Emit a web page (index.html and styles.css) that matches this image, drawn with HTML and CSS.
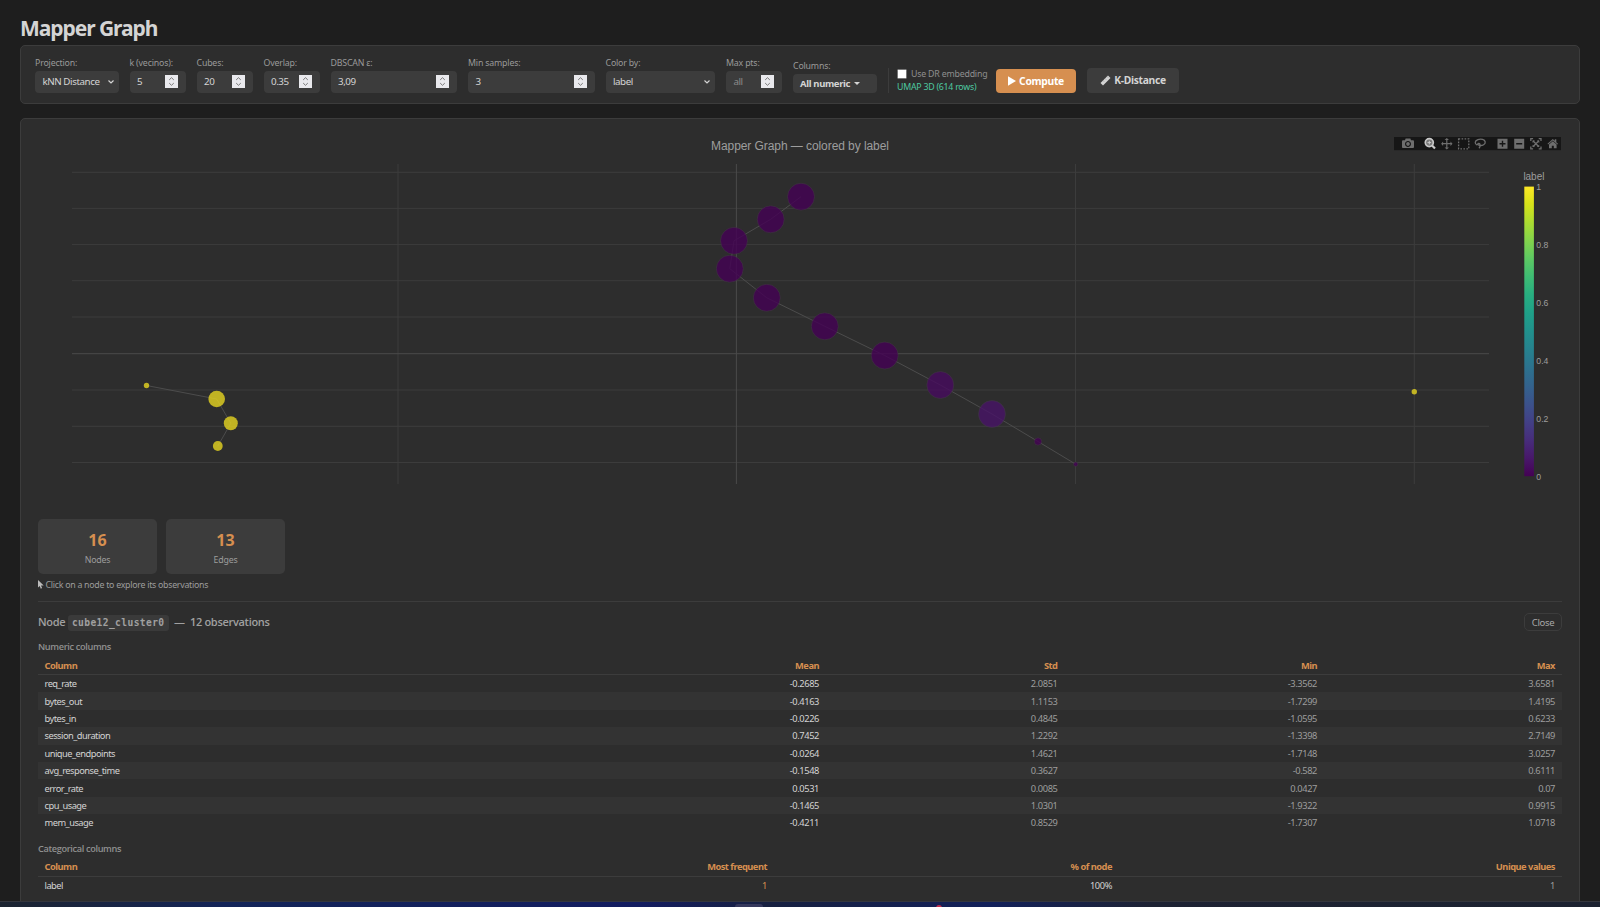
FILE: index.html
```html
<!DOCTYPE html>
<html lang="en">
<head>
  <meta charset="UTF-8">
  <title>Mapper Graph</title>
  <link rel="stylesheet" href="styles.css">
</head>
<body>

  <svg class="defs" width="0" height="0">
    <symbol id="spin" viewBox="0 0 13 13">
      <path d="M4.2 4.9 6.5 2.7 8.8 4.9M4.2 8.1 6.5 10.3 8.8 8.1" fill="none" stroke="#777" stroke-width="1"/>
    </symbol>
    <symbol id="chev" viewBox="0 0 8 6">
      <path d="M1.5 1.5 4 4 6.5 1.5" fill="none" stroke="#d4d4d4" stroke-width="1.2"/>
    </symbol>
  </svg>

  <main class="page">
    <h1>Mapper Graph</h1>

    <section class="panel toolbar">
      <div class="field w-proj"><label>Projection:</label><div class="input select"><span>kNN Distance</span><svg class="chev"><use href="#chev"/></svg></div></div>
      <div class="field w-num"><label>k (vecinos):</label><div class="input"><span>5</span><svg class="spin"><use href="#spin"/></svg></div></div>
      <div class="field w-num"><label>Cubes:</label><div class="input"><span>20</span><svg class="spin"><use href="#spin"/></svg></div></div>
      <div class="field w-num"><label>Overlap:</label><div class="input"><span>0.35</span><svg class="spin"><use href="#spin"/></svg></div></div>
      <div class="field w-wide"><label>DBSCAN ε:</label><div class="input"><span>3,09</span><svg class="spin"><use href="#spin"/></svg></div></div>
      <div class="field w-wide"><label>Min samples:</label><div class="input"><span>3</span><svg class="spin"><use href="#spin"/></svg></div></div>
      <div class="field w-color"><label>Color by:</label><div class="input select"><span>label</span><svg class="chev"><use href="#chev"/></svg></div></div>
      <div class="field w-num"><label>Max pts:</label><div class="input empty"><span>all</span><svg class="spin"><use href="#spin"/></svg></div></div>
      <div class="field w-cols"><label>Columns:</label><button class="dropdown">All numeric <i class="caret"></i></button></div>
      <div class="embed">
        <div class="check"><i class="box"></i><span>Use DR embedding</span></div>
        <div class="umap">UMAP 3D (614 rows)</div>
      </div>
      <button class="btn primary"><svg width="8" height="10" viewBox="0 0 8 10"><path d="M0 .3v9.4L8 5z" fill="#fff"/></svg><span>Compute</span></button>
      <button class="btn"><svg width="11" height="11" viewBox="0 0 11 11"><path d="M.5 8 8 .5 10.5 3 3 10.5z" fill="#d4d4d4"/><path d="M3 5.5l1 1M5 3.5l1 1M7 1.5l1 1" stroke="#777" stroke-width=".6"/></svg><span>K-Distance</span></button>
    </section>

    <section class="panel result">
      <svg class="chart" viewBox="38 119 1524 400" width="1524" height="400">
        <defs>
          <linearGradient id="viridis" x1="0" y1="1" x2="0" y2="0">
            <stop offset="0" stop-color="#440154"/>
            <stop offset=".0627" stop-color="#48186a"/>
            <stop offset=".1255" stop-color="#472d7b"/>
            <stop offset=".1882" stop-color="#424086"/>
            <stop offset=".251" stop-color="#3b528b"/>
            <stop offset=".3137" stop-color="#33638d"/>
            <stop offset=".3765" stop-color="#2c728e"/>
            <stop offset=".4392" stop-color="#26828e"/>
            <stop offset=".502" stop-color="#21918c"/>
            <stop offset=".5647" stop-color="#1fa088"/>
            <stop offset=".6275" stop-color="#28ae80"/>
            <stop offset=".6902" stop-color="#3fbc73"/>
            <stop offset=".7529" stop-color="#5ec962"/>
            <stop offset=".8157" stop-color="#84d44b"/>
            <stop offset=".8784" stop-color="#addc30"/>
            <stop offset=".9412" stop-color="#d8e219"/>
            <stop offset="1" stop-color="#fde725"/>
          </linearGradient>
        </defs>

        <text class="chart-title" x="800" y="149.5" textLength="178" text-anchor="middle">Mapper Graph — colored by label</text>

        <g class="grid">
          <path d="M72 172.3H1489M72 208.4H1489M72 244.6H1489M72 280.7H1489M72 317H1489M72 390H1489M72 426.3H1489M72 462.5H1489"/>
          <path d="M398 164V484M1075.5 164V484M1414.3 164V484"/>
        </g>
        <path class="zero" d="M72 353.7H1489M736.4 164V484"/>

        <g class="edges">
          <path d="M801 196.7 770.7 219.3 734 240.8 729.8 268.7 766.8 297.8 824.8 326.3 884.7 355.5 940.3 385 992 414 1038 441.5 1075.7 464.2"/>
          <path d="M146.5 385.5 216.7 399 230.8 423.3 217.8 446"/>
        </g>

        <g class="nodes">
          <circle cx="801" cy="196.7" r="13.5" fill="#440154"/>
          <circle cx="770.7" cy="219.3" r="13.5" fill="#440154"/>
          <circle cx="734" cy="240.8" r="13.5" fill="#440154"/>
          <circle cx="729.8" cy="268.7" r="13.5" fill="#440154"/>
          <circle cx="766.8" cy="297.8" r="13.5" fill="#440154"/>
          <circle cx="824.8" cy="326.3" r="13.5" fill="#440154"/>
          <circle cx="884.7" cy="355.5" r="13.5" fill="#440154"/>
          <circle cx="940.3" cy="385" r="13.5" fill="#470b5e"/>
          <circle cx="992" cy="414" r="13.5" fill="#481467"/>
          <circle cx="1038" cy="441.5" r="3.7" fill="#440154"/>
          <circle cx="1075.7" cy="464.2" r="2.2" fill="#440154"/>
        </g>
        <g class="nodes yellow">
          <circle cx="146.5" cy="385.5" r="2.7"/>
          <circle cx="216.7" cy="399" r="8.3"/>
          <circle cx="230.8" cy="423.3" r="7"/>
          <circle cx="217.8" cy="446" r="4.9"/>
          <circle cx="1414.3" cy="391.7" r="2.7"/>
        </g>

        <rect x="1524.3" y="186.6" width="9.6" height="289.6" fill="url(#viridis)"/>
        <g class="ticks">
          <text class="bar-title" x="1523.4" y="179.6" textLength="21">label</text>
          <text x="1536.3" y="189.6">1</text>
          <text x="1536.3" y="247.9">0.8</text>
          <text x="1536.3" y="305.8">0.6</text>
          <text x="1536.3" y="363.7">0.4</text>
          <text x="1536.3" y="422">0.2</text>
          <text x="1536.3" y="479.8">0</text>
        </g>

        <rect x="1394" y="137" width="167" height="13.2" fill="#161616"/>
        <g class="modebar">
          <path transform="matrix(.012 0 0 -.012 1402 147.5)" d="m500 450c-83 0-150-67-150-150 0-83 67-150 150-150 83 0 150 67 150 150 0 83-67 150-150 150z m400 150h-120c-16 0-34 13-39 29l-31 93c-6 15-23 28-40 28h-340c-16 0-34-13-39-28l-31-94c-6-15-23-28-40-28h-120c-55 0-100-45-100-100v-450c0-55 45-100 100-100h800c55 0 100 45 100 100v450c0 55-45 100-100 100z m-400-550c-138 0-250 112-250 250 0 138 112 250 250 250 138 0 250-112 250-250 0-138-112-250-250-250z"/>
          <g class="active">
            <circle cx="1429.3" cy="142.6" r="4" fill="#777" stroke-width="1.7"/>
            <path d="M1432.3 145.8 1435 148.6" stroke-width="2.2"/>
            <path d="M1427.5 142.6h3.6M1429.3 140.8v3.6" stroke-width="1"/>
          </g>
          <path d="M1446.2 140h1.2v3.1h3.1v-1.6l2 2.2-2 2.2v-1.6h-3.1v3.1h1.6l-2.2 2-2.2-2h1.6v-3.1h-3.1v1.6l-2-2.2 2-2.2v1.6h3.1v-3.1h-1.6l2.2-2 2.2 2h-1.6z"/>
          <rect class="line" x="1458.6" y="138.8" width="10.2" height="10" stroke-dasharray="1.6 1.4"/>
          <path class="line" d="M1477.3 145.2c-3-1.3-2.7-4.3.6-5.5 3-1.1 6.9-.3 7.3 2.2.4 2.4-2.8 4-5.5 3.5-2.2-.4-2.4-2-1-2.1 1.7-.1 2 3.2.3 4.9"/>
          <path fill-rule="evenodd" d="M1497.5 138.7h10v10h-10zM1501.8 140.7v2.3h-2.3v1.4h2.3v2.3h1.4v-2.3h2.3v-1.4h-2.3v-2.3z"/>
          <path fill-rule="evenodd" d="M1514.2 138.7h10v10h-10zM1516.2 143v1.4h6v-1.4z"/>
          <path class="line" d="M1530.8 141v-2.3h2.3M1538.7 138.7h2.3v2.3M1541 146.5v2.3h-2.3M1533.1 148.8h-2.3v-2.3M1532.9 140.8l6 6M1538.9 140.8l-6 6"/>
          <path d="M1532.6 140.5h2.4l-2.4 2.4zM1539.2 140.5h-2.4l2.4 2.4zM1532.6 147.1h2.4l-2.4-2.4zM1539.2 147.1h-2.4l2.4-2.4z"/>
          <path d="M1547.5 143.7 1552.8 139l2 1.8v-1.5h1.5v2.9l1.7 1.5-.6.7-4.6-4-4.7 4zM1549 144.6l3.8-3.3 3.8 3.3v3.7h-2.8v-2.6h-2v2.6H1549z"/>
        </g>
      </svg>

      <div class="stats">
        <div class="stat"><b>16</b><span>Nodes</span></div>
        <div class="stat"><b>13</b><span>Edges</span></div>
      </div>
      <div class="hint"><svg width="6" height="9" viewBox="0 0 6 9"><path d="M0 0v7.6l1.7-1.5 1.1 2.6 1.3-.6L3 5.5h2.7z" fill="#bbb"/></svg><span>Click on a node to explore its observations</span></div>

      <div class="detail">
        <div class="detail-head">
          <h2>Node <code>cube12_cluster0</code> <span class="count">— &nbsp;12 observations</span></h2>
          <button class="close">Close</button>
        </div>

        <h3>Numeric columns</h3>
        <table class="numeric">
          <colgroup><col class="c-name"><col class="c-mean"><col class="c-std"><col class="c-min"><col></colgroup>
          <thead><tr><th>Column</th><th>Mean</th><th>Std</th><th>Min</th><th>Max</th></tr></thead>
          <tbody>
            <tr><td>req_rate</td><td>-0.2685</td><td>2.0851</td><td>-3.3562</td><td>3.6581</td></tr>
            <tr><td>bytes_out</td><td>-0.4163</td><td>1.1153</td><td>-1.7299</td><td>1.4195</td></tr>
            <tr><td>bytes_in</td><td>-0.0226</td><td>0.4845</td><td>-1.0595</td><td>0.6233</td></tr>
            <tr><td>session_duration</td><td>0.7452</td><td>1.2292</td><td>-1.3398</td><td>2.7149</td></tr>
            <tr><td>unique_endpoints</td><td>-0.0264</td><td>1.4621</td><td>-1.7148</td><td>3.0257</td></tr>
            <tr><td>avg_response_time</td><td>-0.1548</td><td>0.3627</td><td>-0.582</td><td>0.6111</td></tr>
            <tr><td>error_rate</td><td>0.0531</td><td>0.0085</td><td>0.0427</td><td>0.07</td></tr>
            <tr><td>cpu_usage</td><td>-0.1465</td><td>1.0301</td><td>-1.9322</td><td>0.9915</td></tr>
            <tr><td>mem_usage</td><td>-0.4211</td><td>0.8529</td><td>-1.7307</td><td>1.0718</td></tr>
          </tbody>
        </table>

        <h3>Categorical columns</h3>
        <table class="categorical">
          <colgroup><col class="c-name"><col class="c-freq"><col class="c-pct"><col></colgroup>
          <thead><tr><th>Column</th><th>Most frequent</th><th>% of node</th><th>Unique values</th></tr></thead>
          <tbody>
            <tr><td>label</td><td class="accent">1</td><td class="strong">100%</td><td>1</td></tr>
          </tbody>
        </table>
      </div>
    </section>
  </main>

  <footer class="taskbar"><i class="app"></i><i class="badge"></i></footer>

</body>
</html>
```
FILE: styles.css
```css
* {
  box-sizing: border-box;
}
html, body {
  margin: 0;
  padding: 0;
}
body {
  display: flex;
  flex-direction: column;
  height: 907px;
  overflow: hidden;
  background: #1e1e1e;
  color: #d4d4d4;
  font-family: "Noto Sans", "Open Sans", sans-serif;
  font-size: 9.5px;
}
.defs {
  position: absolute;
}
.page {
  flex: 1;
  min-height: 0;
  overflow: hidden;
  padding: 0 20px;
}
h1 {
  margin: 0;
  padding-top: 14px;
  height: 45px;
  line-height: 29px;
  font-size: 21px;
  font-weight: 700;
  letter-spacing: -1.05px;
}
.panel {
  background: #2d2d2d;
  border: 1px solid #3c3c3c;
  border-radius: 5px;
}
button {
  font-family: inherit;
  border: none;
  margin: 0;
}

/* toolbar */
.toolbar {
  display: flex;
  align-items: flex-end;
  gap: 11px;
  height: 59px;
  padding: 0 14px 10.5px;
}
.field label {
  display: block;
  height: 14px;
  line-height: 13px;
  color: #9a9a9a;
  font-size: 8.8px;
  letter-spacing: -0.18px;
  white-space: nowrap;
}
.w-proj { width: 83.5px; }
.w-num { width: 56px; }
.w-wide { width: 126.5px; }
.w-color { width: 109.5px; }
.w-cols { width: 84px; }
.input {
  display: flex;
  align-items: center;
  justify-content: space-between;
  height: 22px;
  padding: 0 8px 0 7.5px;
  border-radius: 4px;
  background: #3c3c3c;
  font-size: 9.8px;
  letter-spacing: -0.45px;
  white-space: nowrap;
}
.select {
  padding-right: 4px;
}
.empty {
  color: #8a8a8a;
}
.spin {
  width: 13px;
  height: 13px;
  background: #e9e9ed;
}
.chev {
  width: 8px;
  height: 6px;
}
.dropdown {
  display: flex;
  align-items: center;
  gap: 4px;
  width: 100%;
  height: 19px;
  padding: 0 7px;
  border-radius: 4px;
  background: #3c3c3c;
  color: #d4d4d4;
  font-size: 9.5px;
  font-weight: 700;
  letter-spacing: -0.35px;
  white-space: nowrap;
}
.caret {
  border: 3px solid transparent;
  border-top-color: #d4d4d4;
  border-bottom: 0;
}
.embed {
  width: 97px;
  height: 25px;
  padding-left: 8px;
  border-left: 1px solid #3c3c3c;
  white-space: nowrap;
}
.check {
  display: flex;
  align-items: center;
  gap: 4px;
  height: 12px;
  color: #8f8f8f;
  font-size: 8.8px;
  letter-spacing: -0.2px;
}
.box {
  flex: none;
  width: 10px;
  height: 10px;
  border: 1px solid #767676;
  border-radius: 1.5px;
  background: #fff;
}
.umap {
  height: 14px;
  line-height: 15px;
  color: #4ec9a0;
  font-size: 8.8px;
  letter-spacing: -0.25px;
}
.btn {
  display: flex;
  align-items: center;
  justify-content: center;
  gap: 3px;
  width: 92px;
  height: 25px;
  padding: 0;
  border-radius: 4px;
  background: #3c3c3c;
  color: #d4d4d4;
  font-size: 10.3px;
  font-weight: 700;
  letter-spacing: -0.3px;
}
.primary {
  width: 80px;
  height: 24px;
  background: #d68f50;
  color: #fff;
}

/* chart */
.result {
  height: 820px;
  margin-top: 14px;
  padding: 0 17px;
}
.chart {
  display: block;
  font-family: "Liberation Sans", Arial, sans-serif;
}
.chart-title {
  fill: #9d9d9d;
  font-size: 12px;
}
.grid path {
  stroke: #3c3c3c;
}
.zero {
  stroke: #4a4a4a;
}
.edges path {
  fill: none;
  stroke: #4c4c4c;
}
.nodes circle {
  opacity: .8;
  stroke: #444;
  stroke-width: .5;
}
.yellow circle {
  fill: #e6d520;
  stroke: none;
}
.ticks text {
  fill: #9d9d9d;
  font-size: 8.7px;
}
.ticks .bar-title {
  font-size: 10px;
}
.modebar {
  fill: #6e6e6e;
}
.modebar .line {
  fill: none;
  stroke: #6e6e6e;
  stroke-width: 1.3;
}
.active {
  fill: none;
  stroke: #c8c8c8;
}

/* stats */
.stats {
  display: flex;
  gap: 9px;
}
.stat {
  display: flex;
  flex-direction: column;
  align-items: center;
  width: 119px;
  height: 55px;
  padding-top: 9px;
  border-radius: 5px;
  background: #3c3c3c;
}
.stat b {
  height: 25px;
  line-height: 24px;
  color: #d68f50;
  font-size: 16px;
}
.stat span {
  line-height: 14px;
  color: #9d9d9d;
  font-size: 8.8px;
  letter-spacing: -0.2px;
}
.hint {
  display: flex;
  align-items: center;
  gap: 1.5px;
  height: 21px;
  color: #9d9d9d;
  font-size: 8.8px;
  letter-spacing: -0.27px;
}

/* node detail */
.detail {
  margin-top: 6px;
  border-top: 1px solid #3c3c3c;
}
.detail-head {
  display: flex;
  align-items: center;
  justify-content: space-between;
  height: 40px;
}
h2, h3 {
  margin: 0;
  font-family: "Open Sans", "Noto Sans", sans-serif;
  font-weight: 600;
}
h2 {
  color: #a0a0a0;
  font-size: 11px;
  letter-spacing: -0.3px;
}
h2 code {
  display: inline-block;
  height: 16px;
  line-height: 16px;
  padding: 0 4px;
  border-radius: 3px;
  background: #3a3a3a;
  font-family: "DejaVu Sans Mono", monospace;
  font-size: 9.6px;
  font-weight: 700;
  letter-spacing: 0.4px;
}
.count {
  margin-left: 3px;
}
.close {
  width: 38px;
  height: 18px;
  padding: 0;
  border: 1px solid #3c3c3c;
  border-radius: 5px;
  background: none;
  color: #a8a8a8;
  font-size: 9.5px;
  letter-spacing: -0.3px;
}
h3 {
  height: 15px;
  line-height: 10px;
  color: #909090;
  font-size: 9.2px;
  letter-spacing: -0.35px;
}
table {
  width: 100%;
  table-layout: fixed;
  border-collapse: separate;
  border-spacing: 0;
}
th, td {
  height: 17.4px;
  line-height: 16px;
  padding: 0 7px;
  text-align: right;
  color: #9d9d9d;
  font-size: 9.3px;
  letter-spacing: -0.4px;
}
td {
  padding-top: 1px;
}
th {
  height: 18px;
  border-bottom: 1px solid #3c3c3c;
  color: #d68f50;
  font-weight: 700;
  letter-spacing: -0.5px;
}
th:first-child, td:first-child {
  padding-left: 6.5px;
  text-align: left;
}
td:first-child {
  letter-spacing: -0.52px;
}
td:first-child, .numeric td:nth-child(2), .strong {
  color: #d4d4d4;
}
tbody tr:nth-child(even) {
  background: #333;
}
.numeric {
  margin-bottom: 12px;
}
.numeric .c-name { width: 500px; }
.numeric .c-mean { width: 288px; }
.numeric .c-std { width: 238.5px; }
.numeric .c-min { width: 259.5px; }
.categorical .c-name { width: 400px; }
.categorical .c-freq { width: 336px; }
.categorical .c-pct { width: 345px; }
.categorical .accent {
  color: #d68f50;
}

.taskbar {
  position: relative;
  height: 6px;
  border-top: 1px solid #34363d;
  background: linear-gradient(90deg, #1c2430, #132458 14%, #131c60 40%, #172040 48%, #12205a 62%, #1d2233 72%, #1b2130);
}
.app {
  position: absolute;
  left: 735px;
  top: 2px;
  width: 28px;
  height: 5px;
  border-radius: 3px 3px 0 0;
  background: #35385c;
}
.badge {
  position: absolute;
  left: 936px;
  top: 3px;
  width: 6px;
  height: 6px;
  border-radius: 50%;
  background: #c22f4e;
}
```
